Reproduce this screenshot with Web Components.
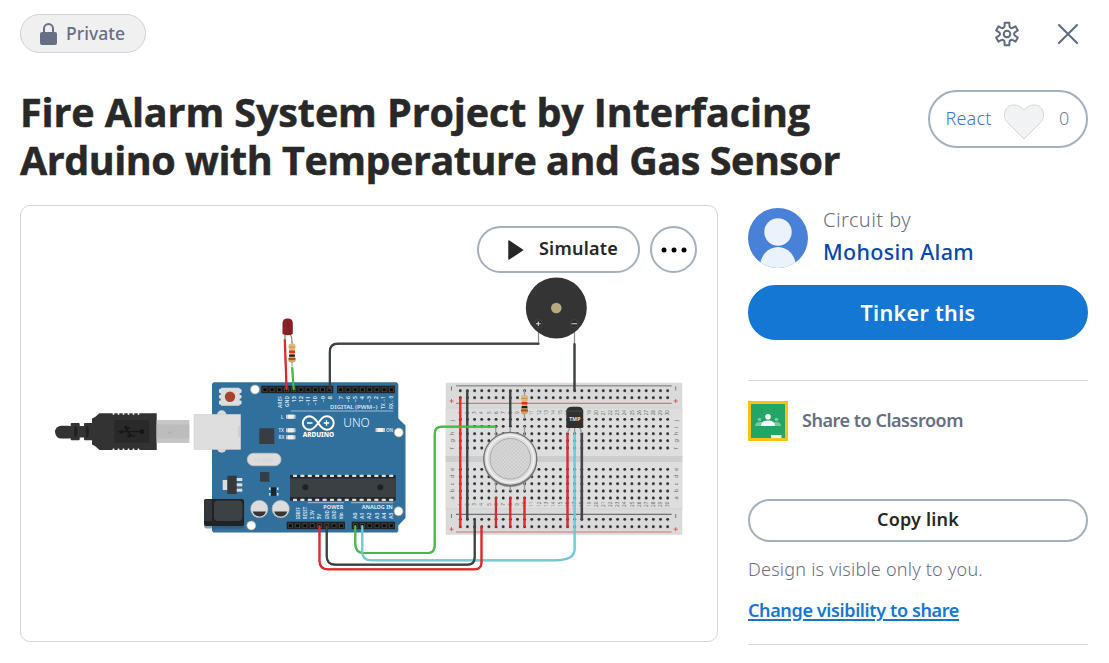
<!DOCTYPE html>
<html lang="en">
<head>
<meta charset="utf-8">
<title>Fire Alarm System Project</title>
<style>
body{margin:0;background:#fff;font-family:"Noto Sans","Open Sans",sans-serif;overflow:hidden}
</style>
</head>
<body>
<design-page></design-page>
<script>
const define=(name,html,setup)=>customElements.define(name,class extends HTMLElement{
  connectedCallback(){
    if(this.shadowRoot)return;
    this.attachShadow({mode:'open'}).innerHTML=html;
    if(setup)setup.call(this,this.shadowRoot);
  }
});

/* A single line of text whose tracking is tuned to a given measure */
define('fit-text',`<style>:host{display:block;white-space:nowrap}span{display:inline-block}:host([underlined]) span{text-decoration:underline;text-decoration-thickness:1.5px;text-underline-offset:2px}</style><span><slot></slot></span>`,function(root){
  const s=root.querySelector('span'),w=+this.getAttribute('measure');
  this.style.width=w+'px';
  const n=this.textContent.length;
  s.style.letterSpacing=(w-s.getBoundingClientRect().width)/n+'px';
});

define('privacy-chip',`<style>
:host{display:flex;box-sizing:border-box;width:126px;height:39px;border:1px solid #cdd2dc;border-radius:20px;background:#f0f0f0;color:#666f83;align-items:center;padding-left:19px;gap:9px;font-size:17.5px;font-weight:500;line-height:36px}
svg{display:block}fit-text{margin-top:-1px}</style>
<svg width="17" height="22" viewBox="0 0 17 22"><rect y="9" width="17" height="13" rx="2" fill="#666f83"/><path d="M4 10V5.6a4.5 4.5 0 0 1 9 0V10" fill="none" stroke="#666f83" stroke-width="2"/></svg>
<fit-text measure="59">Private</fit-text>`);

define('top-bar',`<style>:host{display:flex;justify-content:space-between;align-items:flex-start;height:39px;padding:14px 0 0}
nav{display:flex;gap:37px;align-items:center;height:39px;padding-right:9px}svg{display:block}</style>
<privacy-chip></privacy-chip>
<nav><svg width="26" height="26" viewBox="-13 -13 26 26" fill="none" stroke="#5f6b80" stroke-width="2" stroke-linejoin="round"><path id="gear"/><circle r="3.3"/></svg>
<svg width="22" height="22" viewBox="0 0 22 22" stroke="#5f6b80" stroke-width="2" stroke-linecap="round"><path d="M2 2l18 18M20 2L2 20"/></svg></nav>`,function(root){
  let d='';
  for(let i=0;i<6;i++){
    for(const [r,a] of [[7.2,-24],[8.4,-17],[11.4,-12],[11.4,12],[8.4,17],[7.2,24]]){
      const t=(i*60+a-90)*Math.PI/180;
      d+=(d?'L':'M')+(r*Math.cos(t)).toFixed(2)+' '+(r*Math.sin(t)).toFixed(2);
    }
  }
  root.getElementById('gear').setAttribute('d',d+'Z');
});

define('react-pill',`<style>:host{display:flex;box-sizing:border-box;width:160px;height:58px;border:2px solid #a5afbd;border-radius:29px;align-items:center;padding-left:15.5px;font-size:18px;font-weight:300;line-height:52px;color:#3878d6}
svg{display:block;margin:6px 14px 0 11.5px}fit-text{margin-top:-2px}.n{color:#7b828e}</style>
<fit-text measure="46">React</fit-text>
<svg width="42" height="36" viewBox="0 0 42 36"><path d="M21 35L4.5 18.5C-1.500 12 1.500 1 11 1 14.500 1 18 2.500 21 6 24 2.500 27.500 1 31 1 40.500 1 43.500 12 37.500 18.500Z" fill="#f1f2f4" stroke="#d3d6db"/></svg>
<fit-text class="n" measure="11">0</fit-text>`);

define('pill-button',`<style>:host{display:flex;box-sizing:border-box;align-items:center;justify-content:center;border:2px solid #a5afbd;border-radius:28px;background:#fff;color:#272727;font-weight:600;font-size:18px}
:host([primary]){background:#1477d4;border-color:#1477d4;color:#fff;font-size:21.5px}</style><slot></slot>`);

define('design-title',`<style>:host{display:block;color:#282828;font:700 39.5px/48px "Open Sans","Noto Sans",sans-serif;-webkit-text-stroke:.5px #282828}h1{margin:0;font:inherit}</style>
<h1><fit-text measure="790">Fire Alarm System Project by Interfacing</fit-text><fit-text measure="820">Arduino with Temperature and Gas Sensor</fit-text></h1>`);

define('circuit-drawing',`<style>:host{display:block}svg{display:block;font-family:"Noto Sans",sans-serif}</style>
<svg width="696" height="435" viewBox="21 206 696 435"></svg>`,function(root){
  const L=[],add=s=>L.push(s);
  const R=(x,y,w,h,f,rx=0,e='')=>add(`<rect x="${x}" y="${y}" width="${w}" height="${h}" rx="${rx}" fill="${f}" ${e}/>`);
  const C=(x,y,r,f,e='')=>add(`<circle cx="${x}" cy="${y}" r="${r}" fill="${f}" ${e}/>`);
  const P=(d,s,w=2,e='')=>add(`<path d="${d}" fill="none" stroke="${s}" stroke-width="${w}" ${e}/>`);
  const T=(x,y,s,t,f,e='')=>add(`<text x="${x}" y="${y}" font-size="${s}" fill="${f}" ${e}>${t}</text>`);
  const V=(x,y,s,t,f,e='')=>add(`<text transform="translate(${x} ${y}) rotate(-90)" font-size="${s}" fill="${f}" ${e}>${t}</text>`);

  /* usb cable */
  R(55,425.7,20,12.8,'#333',6.4);
  R(70.7,423,9,17.3,'#333',1);R(84,423,9,17.3,'#333',1);R(79,426,6,11.500,'#333');
  add('<ellipse cx="75.700" cy="431.700" rx="1.700" ry="6" fill="#202020"/><ellipse cx="87.300" cy="431.700" rx="1.700" ry="6" fill="#202020"/>');
  add('<path d="M92 418.500L95 417 99.500 413.300H156.700V450H99.500L95 446 92 444.500Z" fill="#333"/>');
  for(let i=0;i<6;i++){R(112.5+i*5,413,2,1.700,'#fff',.8);R(112.5+i*5,448.6,2,1.700,'#fff',.8)}
  R(114.3,420,35,22.7,'#292929');
  P('M119.500 431.700H141M125 431.700L129.500 427.500M128 431.700L132 436H135','#161616',1.3);
  C(142,431.7,2.4,'#161616');C(126,427.5,1.8,'#161616');R(127.5,434.500,3,3,'#161616');add('<path d="M118 431.700L122.500 429.500V434Z" fill="#161616"/>');
  R(156.7,420,32.6,23,'#c6c6c6');R(156.7,424.5,32.6,14,'#bcbcbc');P('M168 431.500q2 4 4.500 0','#aaa',1);

  /* board */
  add('<path d="M213.500 382.300H396.500L398.300 384V418.500L405.500 425.500V518L398.300 525.500V531L397 532.500H213.500L212 531V384Z" fill="#316f9d"/>');
  [[255,389.5],[398.7,432.5],[251.3,525.5],[398.5,511.3]].forEach(([x,y])=>C(x,y,4.5,'#fff','stroke="#a9a47c" stroke-width=".7"'));
  R(219,389,22.5,4,'#e4e4e4',1);R(219,395,22.5,3.5,'#e4e4e4',1);R(219,400.5,22.5,4,'#e4e4e4',1);
  R(220.7,387.700,19,18,'#dcdcdc',1);C(230,396.7,5.2,'#a6432f');
  C(221.7,415,4.700,'#dadada');C(221.7,448,4.700,'#dadada');
  R(194,414.3,46.7,35.2,'#dedede',0,'stroke="#ccc" stroke-width=".5"');P('M239 426v11','#bbb',.8);
  const hdr=(x,y,w,n)=>{R(x,y,w,7.5,'#222');for(let i=0;i<n;i++){const c=x+w/n*(i+.5);R(c-2.3,y+1.500,4.600,4.700,'#454545');R(c-1.500,y+2.500,3,3,'#080808')}};
  hdr(261.3,385.7,72,10);hdr(337,385.7,58,8);hdr(286.7,521.7,58.3,8);hdr(351.7,521.7,43.3,6);
  const w='#dce9f3',b='font-weight="600"';
  [['AREF',12],['GND',11],['13',6.500],['12',6.500],['~11',9.500],['~10',9.500],['~9',6.500],['8',3.500]].forEach(([t,l],i)=>V(281.6+i*7.15,396+l,5.2,t,w,b+` textLength="${l}" lengthAdjust="spacingAndGlyphs"`));
  [['7',3.500],['~6',6.500],['~5',6.500],['4',3.500],['~3',6.500],['2',3.500],['TX→1',13],['RX←0',13]].forEach(([t,l],i)=>V(342.5+i*7.15,396+l,5.2,t,w,b+` textLength="${l}" lengthAdjust="spacingAndGlyphs"`));
  T(330,409,6,'DIGITAL (PWM~)',w,b+' textLength="47.500" lengthAdjust="spacingAndGlyphs"');P('M290.700 411H393.300','#9fbed4',1);
  [416.7,430.3,437.3].forEach(y=>{R(286,y-2,9.5,4,'#c3ccd2');R(288,y-2,5.500,4,'#f2efe9')});
  T(281,418.500,4.5,'L',w,b);T(278.5,432,4.5,'TX',w,b);T(278.5,439,4.5,'RX',w,b);
  R(375.5,428,9.5,4,'#c3ccd2');R(377.5,428,5.5,4,'#f2efe9');T(386,432,4.5,'ON',w,b);
  P('M318.200 423C315 418.500 313 416.300 309.500 416.300a6.700 6.700 0 0 0 0 13.400C313 429.700 315 427.500 318.200 423S323 416.300 327 416.300a6.700 6.700 0 0 1 0 13.400C323 429.700 321 427.500 318.200 423Z','#fff',2);
  P('M307 423h5.500M323.700 423h5.500M326.500 420.300v5.500','#fff',1.3);
  T(302.7,437.4,6.500,'ARDUINO','#fff','font-weight="800" textLength="31.500" lengthAdjust="spacingAndGlyphs"');
  T(343.3,427.4,12.7,'UNO','#f2f7fa','font-weight="300" textLength="26.500" lengthAdjust="spacingAndGlyphs"');
  R(259.3,428.3,15,15.7,'#383d41');R(247.3,453.3,33.7,12.4,'#ddd',6.2,'stroke="#bdbdbd"');T(254,461.700,6,'16.000','#cfcfcf');R(260,472,9.3,9.7,'#383d41');
  R(222.7,480,5,10,'#ddd');[478,483.3,488.7].forEach(y=>R(236,y,6.3,3,'#ddd'));R(227.3,475.7,9.4,18.3,'#35393c');
  [487.5,493].forEach(y=>{R(269,y,1.500,2.500,'#ddd');R(277,y,1.500,2.500,'#ddd')});R(271,487.3,5,8.5,'#222');
  R(204.2,500.500,40,28,'#2a5170',2,'opacity=".55"');R(204,499,40,27,'#202325',2);R(204,500,8,21,'#33373a');R(214,500.5,28.500,20.500,'#3c4144',4);
  [259.3,280.7].forEach(x=>{C(x,509,8.7,'#dcdcdc','stroke="#aaa" stroke-width=".6"');add(`<path d="M${x-6.600} 511.500H${x+6.600}Q${x+5} 516.500 ${x} 516.500T${x-6.600} 511.500Z" fill="#353535"/>`)});
  R(290,475,105.7,25.700,'#25282a');R(290,478.500,105.7,18.500,'#3b4043');
  for(let i=0;i<14;i++){R(293+i*7.4,474.8,4,2.1,'#ddd',.5);R(293+i*7.4,498.800,4,2.1,'#ddd',.5)}
  C(305.3,487.3,3,'#202325');C(380.3,487.3,3,'#202325');
  P('M307.700 502.700H344M351 502.700H393.300','#9fbed4',1);
  T(323.3,508.500,5.500,'POWER',w,'font-weight="700" textLength="20"');T(361.7,508.500,5.500,'ANALOG IN',w,'font-weight="700" textLength="31"');
  [['IOREF',12],['RESET',12.500],['3.3V',9],['5V',5.500],['GND',9],['GND',9],['Vin',7]].forEach(([t,l],i)=>V(299.7+i*7.2,519.3,4.6,t,w,b+` textLength="${l}" lengthAdjust="spacingAndGlyphs"`));
  ['A0','A1','A2','A3','A4','A5'].forEach((t,i)=>V(357.1+i*7.15,519,5.2,t,w,b));

  /* breadboard */
  R(445.7,382.7,236.6,152,'#dadada',1);R(445.7,408,236.6,48,'#dedede');R(445.7,462,236.6,46.500,'#dedede');
  R(445.7,456,236.6,6,'#cdcdcd');
  P('M445.700 408H682.300M445.700 508.700H682.300','#cfcfcf',.8);
  P('M456 385.700H671.700','#919694',1.600);P('M456 514.300H671.700','#555',1);P('M456 403.300H671.700','#cf6262',1);P('M456 532H671.700','#cf7777',1.2);
  const rows=[390.7,397.7,419.3,426.3,433.7,440.7,448,469.3,476.7,483.7,491,498,519.3,526.7];
  for(let i=0;i<30;i++){
    const x=+(460.3+i*7.15).toFixed(2);
    rows.forEach(y=>{C(x,y+.5,1.700,'#c7c7c7');C(x,y,1.4,'#303030')});
    V(x+1.600,i<9?414:415.3,4.6,i+1,'#666');V(x+1.600,i<9?505.700:507,4.6,i+1,'#666');
  }
  [...'jihgf'].forEach((c,i)=>{[453.500,677.500].forEach(x=>V(x,421+i*7.15,5.6,c,'#666'))});
  [...'edcba'].forEach((c,i)=>{[453.500,677.500].forEach(x=>V(x,471+i*7.15,5.6,c,'#666'))});
  [451.5,675.700].forEach(x=>{P(`M${x} 386.500v4M${x} 514v4`,'#777',1);[401,529.200].forEach(y=>P(`M${x-2} ${y}h4M${x} ${y-2}v4`,'#d15d5d',1))});

  /* jumper wires */
  const wire=(d,c,s)=>{P(d,s,2.200,'stroke-linecap="round"');P(d,c,1.500,'stroke-linecap="round"')};
  const red=d=>wire(d,'#e8262b','#d0282d'),blk=d=>wire(d,'#3d4244','#303638'),grn=d=>wire(d,'#4fb94c','#3eae3e'),cyn=d=>wire(d,'#74c9d7','#67c0ce');
  P('M495.700 427V438M510.300 427V435M524.500 390V394M524.500 414V419M524.500 426V438M495.700 480V491M510.300 480V491M524.500 480V491','#999',1.3);
  red('M460.300 398V526.500');blk('M467.300 391V519.500');
  blk('M510.300 391V426');
  red('M495.900 498V526');red('M510.300 498V526');red('M524.500 498V526');
  grn('M355.300 526V544Q355.300 553 364 553H428Q434.700 553 434.700 545.500V434Q434.700 426.700 442 426.700H495.500');
  cyn('M362.300 526V552Q362.300 560.300 371 560.300H555C568 560.300 574.600 556 574.600 549V434');
  blk('M326.700 526V556Q326.700 564.700 335 564.700H467.500Q474.700 564.700 474.700 557V520');
  red('M319.500 526V561Q319.500 569.300 328 569.300H474.500Q481.500 569.300 481.500 562.500V527');
  red('M567.500 434V526.500');P('M581.800 434V519.500','#444',2.6,'stroke-linecap="round"');
  blk('M329.800 389V352Q329.800 343.700 338 343.700H538.500');blk('M574.500 344V390.500');
  P('M538.500 330V343M574.500 330V343','#888',1.2);

  /* passive parts */
  const resistor=(x,y)=>{P(`M${x} ${y-2}v25`,'#999',1.2);R(x-2.500,y+3,5,13,'#d9b27c',1);R(x-3.5,y,7,6.5,'#dcb87b',2.300);R(x-3.5,y+12.5,7,6.5,'#d0a26a',2.300);R(x-2.900,y+7,5.800,2.500,'#ff2419');R(x-2.900,y+11,5.800,2.200,'#251b10');R(x-3.400,y+14.500,6.800,1.900,'#9a551f');P(`M${x-2.800} ${y+3.500}h5.600`,'#b9954c',1)};
  P('M285 333V339M289.500 334Q292 335 292 343','#888',1.3);
  red('M284.800 340L286.600 389.500');grn('M292.200 368L293.700 389.500');
  resistor(292,343.5);resistor(524.5,395);
  add('<path d="M282.500 334V322.700Q282.800 318.400 287.700 318.400T292.800 322.700V334Q287.700 336.500 282.500 334Z" fill="#862024"/>');P('M285.500 322V332','#93282c',1);

  /* buzzer */
  C(556.3,308,30.5,'#343434');C(556.3,308,5.3,'#b6aa7e');
  C(538.3,323.7,4,'#2b2b2b','stroke="#555" stroke-width=".6"');C(574.3,323.7,4,'#2b2b2b','stroke="#555" stroke-width=".6"');P('M536 323.700h4.600M538.300 321.400v4.600M571.500 323.700h5.600','#ddd',1.1);

  /* gas sensor */
  C(510.3,460,27,'#888');C(510.3,458.8,26.5,'#d5d5d5','stroke="#707070" stroke-width="1.200"');C(510.3,458.8,23.700,'#dedede','stroke="#f2f2f2" stroke-width="1.500"');
  add('<defs><pattern id="mesh" width="3.600" height="3.600" patternUnits="userSpaceOnUse"><rect width="3.600" height="3.600" fill="#d9d9d9"/><circle cx=".9" cy=".9" r=".7" fill="#b4b4b4"/><circle cx="2.700" cy="2.700" r=".7" fill="#b4b4b4"/></pattern></defs>');
  C(510.3,458.8,20.3,'url(#mesh)','stroke="#aaa" stroke-width="1"');

  /* temperature sensor */
  P('M570 427L567.500 433M574.600 427V433M579.500 427L581.800 433','#999',1.4);
  add('<path d="M566.300 426.500V410.500Q567 406.700 572 406.700H578Q582.500 406.700 583.200 410.500V426.500Q583 428 581.500 428H568Q566.300 428 566.300 426.500Z" fill="#303030"/>');P('M567 411H582.500','#4a4a4a',1);
  T(569.3,421.2,5,'TMP','#e8e8e8','font-weight="700" textLength="11"');
  root.querySelector('svg').innerHTML=L.join('');
});

define('circuit-card',`<style>:host{display:block;position:relative;box-sizing:border-box;width:698px;height:437px;border:1px solid #d2d4dc;border-radius:10px;overflow:hidden}
.actions{position:absolute;top:20px;right:20px;display:flex;gap:10px}
.sim{width:163px;height:47px;justify-content:flex-start;padding-left:29px;line-height:42px}.more{width:47px;height:47px}svg{display:block}.sim fit-text{margin:-4px 0 0 15px}</style>
<circuit-drawing></circuit-drawing>
<div class="actions"><pill-button class="sim"><svg width="16" height="20" viewBox="0 0 16 20"><path d="M1 1L14.500 10 1 19Z" fill="#272727" stroke="#272727" stroke-width="1.500" stroke-linejoin="round"/></svg><fit-text measure="79">Simulate</fit-text></pill-button>
<pill-button class="more"><svg width="26" height="6" viewBox="0 0 26 6"><circle cx="3" cy="3" r="2.500"/><circle cx="13" cy="3" r="2.500"/><circle cx="23" cy="3" r="2.500"/></svg></pill-button></div>`);

define('author-info',`<style>:host{display:flex;gap:15px;height:60px}svg{display:block}.t{margin-top:-4px;color:#666f80;font-size:20px;font-weight:300;line-height:32px}.name{color:#0648ad;font-size:21.500px;font-weight:500}</style>
<svg width="60" height="60" viewBox="0 0 60 60"><defs><clipPath id="a"><circle cx="30" cy="30" r="30"/></clipPath></defs><g clip-path="url(#a)"><rect width="60" height="60" fill="#4a81d8"/><g fill="#ebf2fb"><circle cx="30" cy="24" r="13.700"/><ellipse cx="30" cy="59" rx="18" ry="20"/></g></g></svg>
<div class="t"><fit-text measure="88">Circuit by</fit-text><fit-text class="name" measure="151">Mohosin Alam</fit-text></div>`);

define('classroom-share',`<style>:host{display:flex;gap:14px;height:40px;align-items:center;color:#666f83;font-size:18px;font-weight:600;line-height:38px}svg{display:block}fit-text{margin-top:-2px}</style>
<svg width="40" height="40" viewBox="0 0 40 40"><rect width="40" height="40" fill="#fcc112"/><rect x="3" y="3" width="34" height="34" fill="#23a566"/><g fill="#78c99e"><circle cx="11.500" cy="18.500" r="1.800"/><circle cx="28.500" cy="18.500" r="1.800"/><path d="M7 25q0-4 5-4t5 4ZM23 25q0-4 5-4t5 4Z"/></g><g fill="#fff"><circle cx="20" cy="15.700" r="2.800"/><path d="M13 25q0-5.500 7-5.500t7 5.500Z"/><rect x="23" y="34" width="10.500" height="3" fill="#eee"/></g></svg>
<fit-text measure="161">Share to Classroom</fit-text>`);

define('side-panel',`<style>:host{display:flex;flex-direction:column;width:340px;padding-top:3px}
.go{height:55px;margin-top:17px}hr{box-sizing:border-box;width:100%;height:1px;border:0;background:#d9d9d9;margin:40px 0 20px}
.copy{height:43px;margin-top:58px;line-height:40px}.copy fit-text{margin-top:-3px}
.note{color:#666f80;font-size:18px;font-weight:300;line-height:24px;margin-top:15px}
.change{color:#1477d4;font-size:18px;font-weight:600;line-height:24px;margin-top:17px}
hr.end{margin:22px 0 0}</style>
<author-info></author-info><pill-button class="go" primary><fit-text measure="115">Tinker this</fit-text></pill-button><hr>
<classroom-share></classroom-share><pill-button class="copy"><fit-text measure="82">Copy link</fit-text></pill-button>
<fit-text class="note" measure="235">Design is visible only to you.</fit-text><fit-text class="change" underlined measure="211">Change visibility to share</fit-text><hr class="end">`);

define('design-page',`<style>:host{display:block;box-sizing:border-box;width:1109px;height:663px;padding:0 21px 0 20px;overflow:hidden}
.head{display:flex;justify-content:space-between;margin-top:35px;height:96px}react-pill{margin-top:2px}
main{display:flex;gap:30px;margin-top:21px}</style>
<top-bar></top-bar><div class="head"><design-title></design-title><react-pill></react-pill></div>
<main><circuit-card></circuit-card><side-panel></side-panel></main>`);
</script>
</body>
</html>
